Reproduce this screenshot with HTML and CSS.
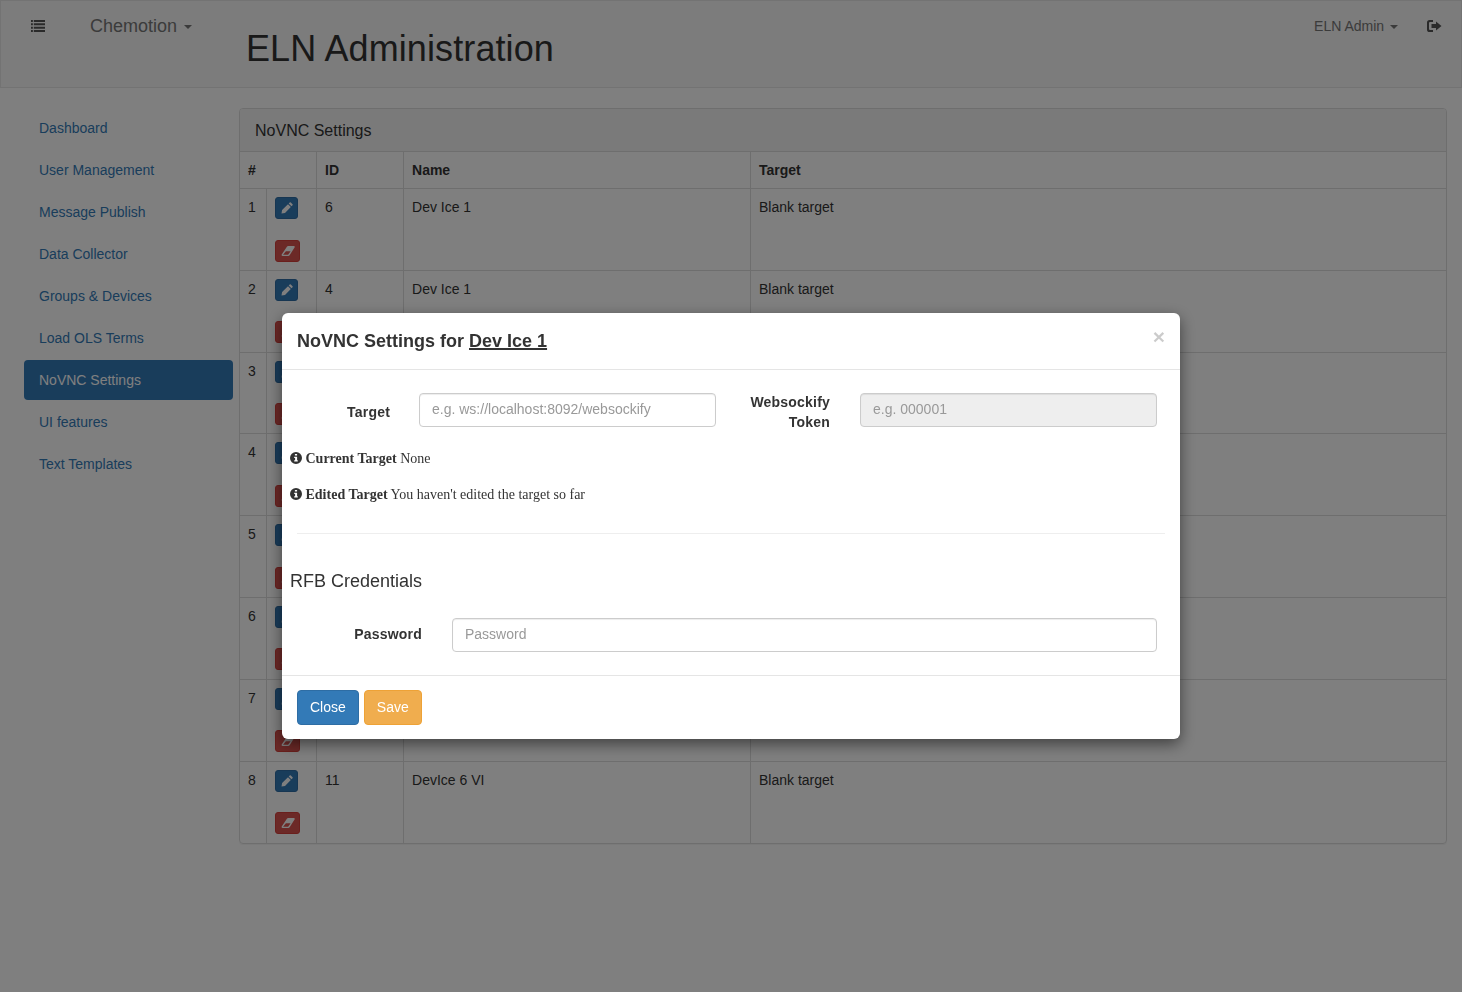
FILE: index.html
```html
<!DOCTYPE html>
<html lang="en">
<head>
<meta charset="utf-8">
<title>ELN Administration</title>
<link rel="stylesheet" href="styles.css">
</head>
<body>
<svg class="defs" width="0" height="0" aria-hidden="true">
  <symbol id="i-pencil" viewBox="0 0 12 12"><path d="M8.700.500a.8.8 0 0 1 1.100 0l1.700 1.700a.8.8 0 0 1 0 1.100l-1 1L7.700 1.500zM7 2.200l2.800 2.800-5.800 5.900L.5 11.500l.6-3.400z"/></symbol>
  <symbol id="i-eraser" viewBox="0 0 14 12"><path fill-rule="evenodd" d="M9 1h4a.8.8 0 0 1 .7 1.200L8.600 10.300a1.600 1.600 0 0 1-1.300.7H1.600a1 1 0 0 1-.9-1.500L5.900 1.800A1.600 1.600 0 0 1 7.200 1zM4.900 6.200 2.100 9.800h5l2.500-3.600z"/></symbol>
  <symbol id="i-info" viewBox="0 0 12 12"><path fill-rule="evenodd" d="M6 0a6 6 0 1 1 0 12A6 6 0 0 1 6 0zM4.900 1.900v1.700h2.200V1.900zM4.200 4.800v1.100h.9v2.400h-.9v1.200h3.600V8.300h-.7V4.800z"/></symbol>
</svg>

<header class="topbar">
  <svg class="list-icon" viewBox="0 0 15 12" preserveAspectRatio="none" aria-hidden="true"><path d="M0 0h2v2H0zM3 0h12v2H3zM0 3.300h2v2H0zM3 3.300h12v2H3zM0 6.700h2v2H0zM3 6.700h12v2H3zM0 10h2v2H0zM3 10h12v2H3z"/></svg>
  <a class="brand">Chemotion <span class="caret"></span></a>
  <h1 class="page-title">ELN Administration</h1>
  <a class="user">ELN Admin <span class="caret"></span></a>
  <svg class="logout" viewBox="0 0 15 12" aria-hidden="true"><path d="M6 0v2H3a1 1 0 0 0-1 1v6a1 1 0 0 0 1 1h3v2H2.600A2.600 2.600 0 0 1 0 9.400V2.600A2.600 2.600 0 0 1 2.600 0z"/><path d="M9 1.500 14.500 6 9 10.500V8H4.500V4H9z"/></svg>
</header>

<main class="layout">
  <nav class="sidenav">
    <a class="pill">Dashboard</a>
    <a class="pill">User Management</a>
    <a class="pill">Message Publish</a>
    <a class="pill">Data Collector</a>
    <a class="pill">Groups &amp; Devices</a>
    <a class="pill">Load OLS Terms</a>
    <a class="pill active">NoVNC Settings</a>
    <a class="pill">UI features</a>
    <a class="pill">Text Templates</a>
  </nav>

  <section class="panel">
    <div class="panel-heading">NoVNC Settings</div>
    <table class="grid">
      <colgroup><col class="c-num"><col class="c-act"><col class="c-id"><col class="c-name"><col></colgroup>
      <thead><tr><th colspan="2">#</th><th>ID</th><th>Name</th><th>Target</th></tr></thead>
      <tbody>
        <tr><td>1</td><td class="acts"><a class="btn-xs edit"><svg><use href="#i-pencil"/></svg></a><a class="btn-xs del"><svg><use href="#i-eraser"/></svg></a></td><td>6</td><td>Dev Ice 1</td><td>Blank target</td></tr>
        <tr><td>2</td><td class="acts"><a class="btn-xs edit"><svg><use href="#i-pencil"/></svg></a><a class="btn-xs del"><svg><use href="#i-eraser"/></svg></a></td><td>4</td><td>Dev Ice 1</td><td>Blank target</td></tr>
        <tr><td>3</td><td class="acts"><a class="btn-xs edit"><svg><use href="#i-pencil"/></svg></a><a class="btn-xs del"><svg><use href="#i-eraser"/></svg></a></td><td></td><td></td><td></td></tr>
        <tr><td>4</td><td class="acts"><a class="btn-xs edit"><svg><use href="#i-pencil"/></svg></a><a class="btn-xs del"><svg><use href="#i-eraser"/></svg></a></td><td></td><td></td><td></td></tr>
        <tr><td>5</td><td class="acts"><a class="btn-xs edit"><svg><use href="#i-pencil"/></svg></a><a class="btn-xs del"><svg><use href="#i-eraser"/></svg></a></td><td></td><td></td><td></td></tr>
        <tr><td>6</td><td class="acts"><a class="btn-xs edit"><svg><use href="#i-pencil"/></svg></a><a class="btn-xs del"><svg><use href="#i-eraser"/></svg></a></td><td></td><td></td><td></td></tr>
        <tr><td>7</td><td class="acts"><a class="btn-xs edit"><svg><use href="#i-pencil"/></svg></a><a class="btn-xs del"><svg><use href="#i-eraser"/></svg></a></td><td></td><td></td><td></td></tr>
        <tr><td>8</td><td class="acts"><a class="btn-xs edit"><svg><use href="#i-pencil"/></svg></a><a class="btn-xs del"><svg><use href="#i-eraser"/></svg></a></td><td>11</td><td>DevIce 6 VI</td><td>Blank target</td></tr>
      </tbody>
    </table>
  </section>
</main>

<div class="backdrop"></div>

<div class="modal-wrap">
  <div class="modal">
    <div class="modal-header">
      <h4 class="modal-title">NoVNC Settings for <u class="device">Dev Ice 1</u></h4>
      <span class="close">×</span>
    </div>
    <div class="modal-body">
      <div class="target-row">
        <label class="lbl lbl-target">Target</label>
        <input class="field" placeholder="e.g. ws://localhost:8092/websockify">
        <label class="lbl lbl-token">Websockify Token</label>
        <input class="field" placeholder="e.g. 000001" disabled>
      </div>
      <p class="note"><svg class="info"><use href="#i-info"/></svg> <b>Current Target</b> None</p>
      <p class="note"><svg class="info"><use href="#i-info"/></svg> <b>Edited Target</b> You haven't edited the target so far</p>
      <hr class="rule">
      <h4 class="sub">RFB Credentials</h4>
      <div class="pw-row">
        <label class="lbl lbl-pw">Password</label>
        <input class="field" placeholder="Password">
      </div>
    </div>
    <div class="modal-footer">
      <button class="btn primary">Close</button>
      <button class="btn warning">Save</button>
    </div>
  </div>
</div>
</body>
</html>
```

FILE: styles.css
```css
* { box-sizing: border-box; }
html, body { margin: 0; padding: 0; }
body {
  min-height: 992px;
  background: #fff;
  color: #333;
  font: 14px/20px "Liberation Sans", Arial, sans-serif;
  overflow: hidden;
}
.defs { position: absolute; }

/* top bar */
.topbar {
  display: flex;
  align-items: flex-start;
  height: 88px;
  padding: 0 19px 0 30px;
  background: #f8f8f8;
  border: 1px solid #e7e7e7;
}
.list-icon { width: 14px; height: 12px; margin-top: 19px; fill: #555; flex: none; }
.brand { margin: 14px 0 0 45px; font-size: 18px; line-height: 22px; color: #777; flex: none; width: 156px; }
.page-title { margin: 28px 0 0; font-size: 36px; line-height: 40px; font-weight: 500; letter-spacing: .1px; color: #333; flex: none; }
.user { margin: 15px 0 0 auto; color: #777; line-height: 20px; }
.logout { width: 15px; height: 12px; margin: 19px 0 0 29px; fill: #555; flex: none; }
.caret {
  display: inline-block;
  width: 0; height: 0;
  margin-left: 2px;
  vertical-align: middle;
  border-top: 4px solid;
  border-left: 4px solid transparent;
  border-right: 4px solid transparent;
}

/* page */
.layout { display: flex; align-items: flex-start; padding: 20px 15px 0 24px; }
.sidenav { display: flex; flex-direction: column; gap: 2px; width: 209px; flex: none; }
.pill { display: block; padding: 10px 15px; border-radius: 4px; color: #337ab7; }
.pill.active { background: #337ab7; color: #fff; }

.panel { flex: 1; margin-left: 6px; border: 1px solid #ddd; border-radius: 4px; box-shadow: 0 1px 1px rgba(0,0,0,.05); overflow: hidden; }
.panel-heading { height: 43px; padding: 10px 15px; font-size: 16px; line-height: 24px; background: #f5f5f5; border-bottom: 1px solid #ddd; color: #333; }
.grid { width: 100%; border-collapse: collapse; table-layout: fixed; }
.c-num { width: 26.500px; }
.c-act { width: 50px; }
.c-id { width: 87px; }
.c-name { width: 347px; }
.grid th, .grid td { padding: 8px; border: 1px solid #ddd; text-align: left; vertical-align: top; }
.grid tr > :first-child { border-left: 0; }
.grid tr > :last-child { border-right: 0; }
.grid thead tr:first-child th { border-top: 0; }
.grid tbody tr:last-child td { border-bottom: 0; }
.grid th { height: 36px; }
.grid tbody tr { height: 81.800px; }
.acts { line-height: 0; }
.btn-xs { display: flex; align-items: center; justify-content: center; height: 22px; border-radius: 3px; }
.btn-xs svg { fill: #fff; }
.edit { width: 23px; background: #337ab7; border: 1px solid #2e6da4; }
.edit svg { width: 12px; height: 12px; }
.del { width: 25px; margin-top: 20.500px; background: #d9534f; border: 1px solid #d43f3a; }
.del svg { width: 14px; height: 12px; }

/* modal */
.backdrop { position: fixed; inset: 0; background: rgba(0,0,0,.5); }
.modal-wrap { position: fixed; inset: 0; display: flex; justify-content: center; align-items: flex-start; padding-top: 313px; }
.modal {
  width: 898px;
  background: #fff;
  border-radius: 6px;
  box-shadow: 0 5px 15px rgba(0,0,0,.5);
}
.modal-header { position: relative; height: 57px; padding: 15px; border-bottom: 1px solid #e5e5e5; }
.modal-title { margin: 0; font-size: 18px; line-height: 26px; font-weight: 700; color: #333; }
.device { text-decoration-thickness: 2px; }
.close { position: absolute; top: 10px; right: 15px; font-size: 21px; line-height: 27px; font-weight: 700; color: #000; opacity: .2; }
.modal-body { padding: 23px 15px 0 8px; height: 305px; }
.target-row { display: grid; grid-template-columns: 100px 297px 86px 297px; column-gap: 29px; }
.lbl { font-weight: 700; text-align: right; color: #333; letter-spacing: .2px; }
.lbl-target { padding-top: 9px; }
.lbl-pw { padding-top: 6px; }
.lbl-token { margin-top: -1px; padding-right: 1px; }
.field {
  display: block;
  width: 100%;
  height: 34px;
  padding: 5px 12px 7px;
  font: inherit;
  color: #555;
  background: #fff;
  border: 1px solid #ccc;
  border-radius: 4px;
  box-shadow: inset 0 1px 1px rgba(0,0,0,.075);
}
.field::placeholder { color: #999; opacity: 1; }
.field:disabled { background: #eee; }
.note { margin: 0; font-family: "Liberation Serif", "Times New Roman", serif; font-size: 14px; line-height: 20px; color: #333; }
.target-row + .note { margin-top: 17px; }
.note + .note { margin-top: 16px; }
.info { width: 12px; height: 12px; fill: #333; vertical-align: -1px; }
.rule { margin: 28px 0 0 7px; border: 0; border-top: 1px solid #eee; }
.sub { margin: 37px 0 0; font-size: 18px; line-height: 20px; font-weight: 500; color: #333; }
.pw-row { display: grid; grid-template-columns: 132px 705px; column-gap: 30px; margin-top: 27px; }
.modal-footer { display: flex; gap: 5px; height: 64px; padding: 14px 15px; border-top: 1px solid #e5e5e5; }
.btn { height: 35px; padding: 5px 12px 7px; font: inherit; color: #fff; border: 1px solid; border-radius: 4px; }
.primary { background: #337ab7; border-color: #2e6da4; }
.warning { background: #f0ad4e; border-color: #eea236; }
```
